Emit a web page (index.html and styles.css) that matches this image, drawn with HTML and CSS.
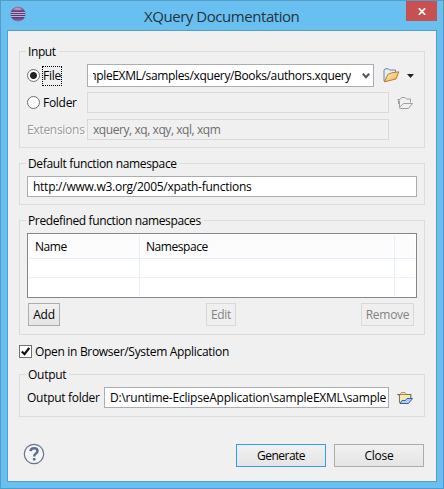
FILE: index.html
```html
<!DOCTYPE html>
<html lang="en">
<head>
<meta charset="utf-8">
<title>XQuery Documentation</title>
<link rel="stylesheet" href="styles.css">
</head>
<body>
<div class="window">
  <header class="titlebar">
    <svg class="logo" width="16" height="16" viewBox="0 0 16 16">
      <defs><linearGradient id="orb" x1="0" y1="0" x2="0" y2="1"><stop offset="0" stop-color="#a57cb0"/><stop offset=".35" stop-color="#58427d"/><stop offset=".7" stop-color="#4b3672"/><stop offset="1" stop-color="#9a7bb3"/></linearGradient></defs>
      <circle cx="8" cy="8" r="7.5" fill="url(#orb)"/>
      <path d="M3 3.5Q7.500 0 12.500 3.500Q7.500 5 3 3.500Z" fill="#d9b4d8" opacity=".6"/>
      <path d="M1 6.500H15M.5 8.500H15.500M1 10.500H15" stroke="#d9cbe4" stroke-width=".8"/>
    </svg>
    <h1 class="title">XQuery Documentation</h1>
    <button class="x" aria-label="Close window"><svg width="8" height="7" viewBox="0 0 8 7"><path d="M.8.2 7.200 6.800M7.200.2.8 6.800" stroke="#fff" stroke-width="1.700"/></svg></button>
  </header>
  <main class="client">
    <section class="group input-group">
      <h2 class="legend t-input">Input</h2>
      <div class="row row-file">
        <span class="radio on"></span><label class="focus">File</label>
        <div class="combo"><div class="clip"><span class="t-path">sampleEXML/samples/xquery/Books/authors.xquery</span></div>
          <svg width="8" height="6" viewBox="0 0 8 6"><path d="M.8.8 4 4.200 7.200.8" fill="none" stroke="#555" stroke-width="2"/></svg></div>
        <svg class="open" width="17" height="15" viewBox="0 0 17 15">
          <defs><linearGradient id="gold" x1="0" y1="0" x2="1" y2="1"><stop offset="0" stop-color="#fff0c4"/><stop offset="1" stop-color="#edae4b"/></linearGradient></defs>
          <path d="M1 13V2L2 .8H5.500L6.500 2H12.500V5L4 13Z" fill="#e6edf0" stroke="#71899a"/>
          <path d="M1.500 13.800 4.800 6.500 9 4.800 15.800 3.800 13 11Z" fill="url(#gold)" stroke="#c17b2d"/>
        </svg>
        <svg class="drop" width="7" height="4" viewBox="0 0 7 4"><path d="M0 0H7L3.500 4Z" fill="#222"/></svg>
      </div>
      <div class="row row-folder">
        <span class="radio"></span><label>Folder</label><div class="field off"></div>
        <svg class="folder" width="16" height="12" viewBox="0 0 16 12"><path d="M2.500 10.500V4L.5 2.500H3L4.500.5H8L9.500 2H13.500V5.500M2.500 11.500H11.500L15.500 6.500H6.500L2.500 10.500M1.500 3V7" fill="none" stroke="#a0a0a0"/></svg>
      </div>
      <div class="row row-ext"><label class="ext">Extensions</label><div class="field off"><span class="t-exts">xquery, xq, xqy, xql, xqm</span></div></div>
    </section>

    <section class="group default-group">
      <h2 class="legend t-default">Default function namespace</h2>
      <div class="field"><span class="t-url">http://www.w3.org/2005/xpath-functions</span></div>
    </section>

    <section class="group pre-group">
      <h2 class="legend t-pre">Predefined function namespaces</h2>
      <div class="table">
        <div class="tr th"><span><b class="t-name">Name</b></span><span><b class="t-ns">Namespace</b></span><span></span></div>
        <div class="tr"><span></span><span></span><span></span></div>
        <div class="tr last"><span></span><span></span><span></span></div>
      </div>
      <div class="actions"><button class="btn add">Add</button><button class="btn edit" disabled>Edit</button><button class="btn remove" disabled>Remove</button></div>
    </section>

    <div class="check-row">
      <span class="check"><svg width="9" height="9" viewBox="0 0 9 9"><path d="M.8 4.500 3.500 7.200 8.200 1" fill="none" stroke="#111" stroke-width="2.200"/></svg></span>
      <label class="t-open">Open in Browser/System Application</label>
    </div>

    <section class="group out-group">
      <h2 class="legend">Output</h2>
      <div class="row"><label class="outlabel">Output folder</label><div class="field"><span class="t-out">D:\runtime-EclipseApplication\sampleEXML\sample</span></div>
        <svg class="folder" width="16" height="12" viewBox="0 0 16 12"><path d="M2.500 11V4L.5 2.500H3L4.500.5H8L9.500 2.500H13.500V6.500" fill="#f9e9a8" stroke="#b59848"/><path d="M14.500 2.500H.5M14 3V6" stroke="#54596f" fill="none" opacity=".65"/><path d="M2.500 3V10.500" stroke="#7b7460"/><path d="M3 11.500H11.500L15.500 6.500H10L8.500 8.500H5Z" fill="#a9d0fa" stroke="#3e5cac"/></svg>
      </div>
    </section>

    <footer class="footer">
      <svg class="help" width="22" height="22" viewBox="0 0 22 22"><circle cx="11" cy="11" r="9.700" fill="#f4f5f7" stroke="#66758f" stroke-width="1.200"/><path d="M7.500 8.200Q7.800 5.300 11 5.300Q14.500 5.300 14.500 8Q14.500 9.500 12.700 10.700Q11.200 11.600 11.200 13.400" fill="none" stroke="#5c6f93" stroke-width="2.500"/><rect x="9.800" y="15" width="2.800" height="2.600" rx=".8" fill="#5c6f93"/></svg>
      <button class="btn gen">Generate</button><button class="btn close">Close</button>
    </footer>
  </main>
</div>
</body>
</html>
```

FILE: styles.css
```css
* { box-sizing: border-box; }
body { margin: 0; font: 12px/16px "Open Sans", "Noto Sans", sans-serif; color: #000; }
span, label, h1, h2, b { white-space: nowrap; }
svg { display: block; flex: none; }
h1, h2, b { margin: 0; font-size: 12px; font-weight: 400; }
button { font: inherit; padding: 0; margin: 0; }
.window { width: 444px; height: 489px; background: #69c0f0; border: 1px solid #539cc4; padding: 0 6px 6px; }
.titlebar { height: 29px; display: flex; padding-left: 3px; }
.logo { margin-top: 5px; }
.title { font-size: 15px; line-height: 20px; margin: 5px 0 0 118px; color: #1f343f; letter-spacing: -.45px; }
.x { margin: 0 0 0 auto; width: 31px; height: 20px; background: #c75050; border: 0; display: flex; align-items: center; justify-content: center; }
.client { height: 452px; background: #f0f0f0; border: 1px solid #549fc9; padding: 20px 11px 0; }
.group { border: 1px solid #dcdcdc; width: 406px; padding: 0 7px; margin-bottom: 15px; }
.legend { width: max-content; height: 16px; margin: -8px 0 0 -1px; padding: 0 3px 0 2px; background: #f0f0f0; letter-spacing: -.28px; }
.input-group { height: 97px; }
.default-group { height: 42px; }
.pre-group { height: 115px; margin-bottom: 9px; }
.out-group { height: 43px; margin-bottom: 27px; }
label, .field, .combo, .table, .btn { letter-spacing: -.28px; }
.legend.t-input { letter-spacing: -.4px; }
.legend.t-default { letter-spacing: -.34px; }
.legend.t-pre { letter-spacing: -.37px; }
.t-path { letter-spacing: -.35px; }
.t-exts { letter-spacing: -.43px; }
.t-url { letter-spacing: -.26px; }
.t-name, .t-ns { letter-spacing: -.45px; }
.t-open { letter-spacing: -.31px; }
.t-out { letter-spacing: -.22px; }
.row { display: flex; align-items: center; }
.row-file { height: 23px; margin-top: 4px; }
.row-folder { height: 21px; margin-top: 5px; }
.row-ext { height: 21px; margin-top: 6px; }
.radio { width: 13px; height: 13px; border: 1px solid #707070; border-radius: 50%; background: #fff; flex: none; }
.radio.on { background: radial-gradient(circle, #222 3px, #fff 4px); }
.row-file .focus { width: 20px; height: 20px; line-height: 18px; margin: 0 25px 0 2px; border: 1px dotted #000; }
.row-folder label { margin-left: 3px; width: 44px; }
.row .ext { width: 60px; color: #9a9a9a; text-shadow: 1px 1px #fff; }
.combo { width: 287px; height: 23px; border: 1px solid #abadb3; background: #fff; display: flex; align-items: center; padding-left: 5px; }
.clip { width: 258px; overflow: hidden; display: flex; justify-content: flex-end; margin-right: 11px; }
.open { margin-left: 9px; }
.drop { margin-left: 7px; }
.field { width: 302px; height: 21px; border: 1px solid #abadb3; background: #fff; padding: 1px 5px; display: flex; align-items: center; overflow: hidden; }
.field.off { background: #f0f0f0; border-color: #d9d9d9; color: #6d6d6d; }
.folder { margin-left: 8px; }
.default-group .field { width: 390px; margin-top: 4px; }
.table { width: 390px; height: 65px; margin-top: 4px; border: 1px solid #828790; background: #fff; padding: 1px; }
.tr { display: grid; grid-template-columns: 111px 255px 1fr; height: 19px; border-bottom: 1px solid #edf1f7; }
.tr span { border-right: 1px solid #e6effa; padding-left: 6px; }
.tr span:last-child { border-right: 0; }
.tr.th { height: 24px; line-height: 24px; background: #fcfcfc; border-color: #e5effc; }
.tr.last { height: 18px; border-bottom: 0; }
.actions { display: flex; margin: 5px 0 0 1px; }
.btn { height: 23px; border: 1px solid #acacac; background: linear-gradient(#f0f0f0, #e5e5e5); color: #000; display: flex; align-items: center; justify-content: center; }
.btn:disabled { border-color: #d9d9d9; background: #efefef; color: #838383; }
.add { width: 32px; }
.edit { width: 30px; margin-left: 146px; }
.remove { width: 53px; margin-left: 125px; }
.check-row { display: flex; align-items: center; height: 15px; margin-bottom: 15px; }
.check { width: 13px; height: 13px; border: 1px solid #707070; background: #fff; padding: 1px; margin-right: 3px; }
.out-group .row { margin-top: 4px; }
.row .outlabel { width: 77px; }
.out-group .field { width: 285px; }
.footer { display: flex; }
.help { margin: -1px 0 0 4px; }
.gen { width: 90px; margin-left: 191px; border-color: #3399ff; letter-spacing: -.5px; }
.close { width: 90px; margin-left: 8px; }
```
